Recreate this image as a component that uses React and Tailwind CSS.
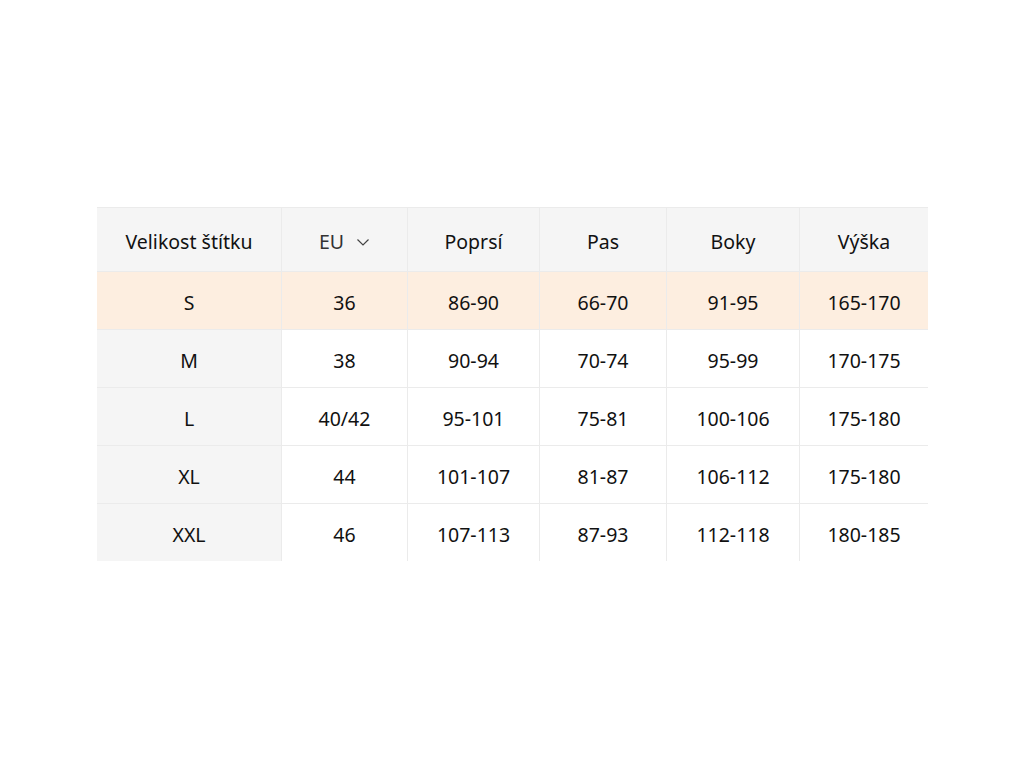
import React from "react";

const headers = ["Velikost štítku", "EU", "Poprsí", "Pas", "Boky", "Výška"];
const rows = [
  ["S", "36", "86-90", "66-70", "91-95", "165-170"],
  ["M", "38", "90-94", "70-74", "95-99", "170-175"],
  ["L", "40/42", "95-101", "75-81", "100-106", "175-180"],
  ["XL", "44", "101-107", "81-87", "106-112", "175-180"],
  ["XXL", "46", "107-113", "87-93", "112-118", "180-185"],
];

export default function App() {
  return (
    <div className="w-[1024px] h-[768px] bg-white pt-[207px] pl-[97px]" style={{ fontFamily: '"Noto Sans", "Open Sans", sans-serif' }}>
      <div className="w-[831px] grid grid-cols-[185px_126px_132px_127px_133px_128px] text-[19.5px] leading-none text-[#111]">
        {headers.map((h, i) => (
          <div
            key={h}
            className={`h-[64px] pt-[4px] bg-[#f5f5f5] border-t border-[#ebebeb] flex items-center justify-center ${i < 5 ? "border-r" : ""}`}
          >
            {i === 1 ? (
              <span className="flex items-center gap-[12px] text-[#333]">
                EU
                <svg width="14" height="14" viewBox="0 0 14 14" fill="none" stroke="#444" strokeWidth="1.2">
                  <path d="M1.5 4.5 L7 10 L12.5 4.5" />
                </svg>
              </span>
            ) : (
              h
            )}
          </div>
        ))}
        {rows.map((r, ri) =>
          r.map((c, ci) => (
            <div
              key={ri + "-" + ci}
              className={`h-[58px] pt-[4px] border-t border-[#ebebeb] flex items-center justify-center ${ci < 5 ? "border-r" : ""} ${
                ri === 0 ? "bg-[#fdeee0]" : ci === 0 ? "bg-[#f5f5f5]" : "bg-white"
              }`}
            >
              {c}
            </div>
          ))
        )}
      </div>
    </div>
  );
}
